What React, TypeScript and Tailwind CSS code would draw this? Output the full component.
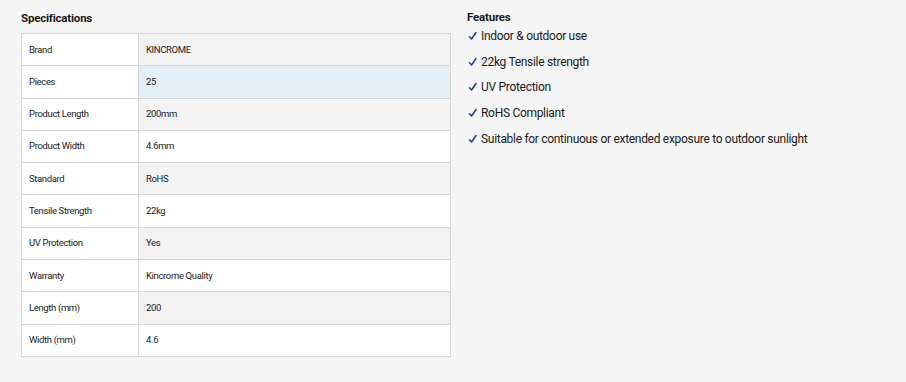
import React from 'react';

const specs: [string, string][] = [
  ['Brand', 'KINCROME'],
  ['Pieces', '25'],
  ['Product Length', '200mm'],
  ['Product Width', '4.6mm'],
  ['Standard', 'RoHS'],
  ['Tensile Strength', '22kg'],
  ['UV Protection', 'Yes'],
  ['Warranty', 'Kincrome Quality'],
  ['Length (mm)', '200'],
  ['Width (mm)', '4.6'],
];

const features = [
  'Indoor & outdoor use',
  '22kg Tensile strength',
  'UV Protection',
  'RoHS Compliant',
  'Suitable for continuous or extended exposure to outdoor sunlight',
];

export default function App() {
  return (
    <div className="w-[906px] h-[382px] bg-[#f5f5f5] text-[#1a1a1a] font-['Roboto',sans-serif] flex">
      {/* Specs table */}
      <div className="pl-[21px] pt-[10px] w-[451px]">
        <h3 className="text-[11.5px] font-bold h-[23px] leading-[16px] tracking-[-0.2px]">Specifications</h3>
        <table className="w-[430px] border-collapse text-[9.5px] tracking-[-0.35px]">
          <tbody>
            {specs.map(([label, value], i) => (
              <tr key={label} className="h-[32.3px]">
                <td className="w-[117px] border border-[#d5d5d5] bg-white pl-[7px]">{label}</td>
                <td
                  className={
                    'border border-[#d5d5d5] pl-[7px] ' +
                    (i === 1 ? 'bg-[#e3eef6]' : i % 2 === 0 ? 'bg-[#f3f3f3]' : 'bg-white')
                  }
                >
                  {value}
                </td>
              </tr>
            ))}
          </tbody>
        </table>
      </div>

      {/* Features */}
      <div className="pl-[16px] pt-[9px]">
        <h3 className="text-[11.5px] font-bold leading-[16px] tracking-[-0.2px]">Features</h3>
        <ul className="flex flex-col gap-[9.7px] mt-[3px]">
          {features.map((f) => (
            <li key={f} className="flex items-center h-[16px] text-[12px] tracking-[-0.3px]">
              <svg width="14" height="16" viewBox="0 0 14 16" className="shrink-0">
                <path d="M2.5 8.8 L4.6 11 L9 4.5" fill="none" stroke="#1f3c88" strokeWidth="1.5" strokeLinecap="round" strokeLinejoin="round" />
              </svg>
              {f}
            </li>
          ))}
        </ul>
      </div>
    </div>
  );
}
